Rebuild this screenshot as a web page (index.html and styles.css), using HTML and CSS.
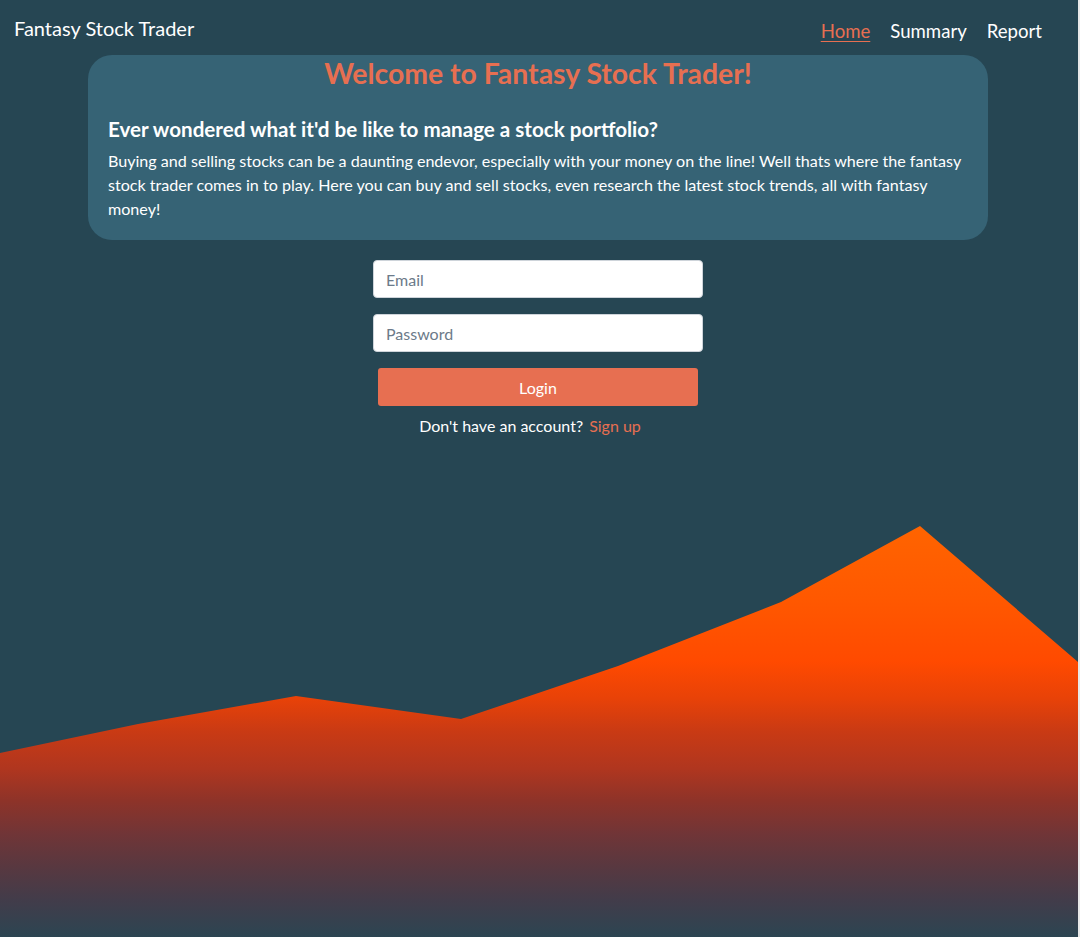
FILE: index.html
```html
<!DOCTYPE html>
<html lang="en">
<head>
<meta charset="utf-8">
<title>Fantasy Stock Trader</title>
<link rel="stylesheet" href="styles.css">
</head>
<body>
<div class="page">
  <header class="navbar">
    <a class="brand" href="#">Fantasy Stock Trader</a>
    <nav class="nav">
      <a class="nav-link active" href="#">Home</a>
      <a class="nav-link" href="#">Summary</a>
      <a class="nav-link" href="#">Report</a>
    </nav>
  </header>

  <section class="intro">
    <h1 class="intro-title">Welcome to Fantasy Stock Trader!</h1>
    <h2 class="intro-sub">Ever wondered what it'd be like to manage a stock portfolio?</h2>
    <p class="intro-text">Buying and selling stocks can be a daunting endevor, especially with your money on the line! Well thats where the fantasy stock trader comes in to play. Here you can buy and sell stocks, even research the latest stock trends, all with fantasy money!</p>
  </section>

  <form class="login">
    <input class="field" type="email" placeholder="Email">
    <input class="field" type="password" placeholder="Password">
    <button class="btn" type="button">Login</button>
    <p class="signup">Don't have an account? <a href="#" class="signup-link">Sign up</a></p>
  </form>

  <svg class="chart" viewBox="0 0 1078 411" preserveAspectRatio="none" aria-hidden="true">
    <defs>
      <linearGradient id="area" x1="0" y1="0" x2="0" y2="411" gradientUnits="userSpaceOnUse">
        <stop offset="0" stop-color="#ff6400"/>
        <stop offset="0.18" stop-color="#ff5800"/>
        <stop offset="0.33" stop-color="#ff4a00"/>
        <stop offset="0.42" stop-color="#e84208"/>
        <stop offset="0.50" stop-color="#c93a14"/>
        <stop offset="0.59" stop-color="#b0361f"/>
        <stop offset="0.67" stop-color="#8d3329"/>
        <stop offset="0.75" stop-color="#703537"/>
        <stop offset="0.83" stop-color="#583840"/>
        <stop offset="0.91" stop-color="#423c4a"/>
        <stop offset="1" stop-color="#2c4552"/>
      </linearGradient>
    </defs>
    <polygon fill="url(#area)" points="0,227 138,198 296,170 461,193 618,140 781,76 920,0 1078,136 1078,411 0,411"/>
  </svg>
</div>
</body>
</html>
```

FILE: styles.css
```css
html, body {
  margin: 0;
  padding: 0;
}

body {
  background: #e9e9e9;
  font-family: Lato, "Open Sans", "Noto Sans", sans-serif;
  color: #ffffff;
}

.page {
  margin-right: 2px;
  min-height: 937px;
  background: #264653;
  display: flex;
  flex-direction: column;
  overflow: hidden;
}

.navbar {
  display: flex;
  justify-content: space-between;
  align-items: flex-start;
  padding: 15px 36px 0 14px;
  height: 40px;
}

.brand {
  color: #ffffff;
  text-decoration: none;
  font-size: 20px;
  line-height: 26px;
}

.nav {
  display: flex;
  gap: 20px;
  padding-top: 3px;
}

.nav-link {
  color: #ffffff;
  text-decoration: none;
  font-size: 18.6px;
  line-height: 26px;
}

.nav-link.active {
  color: #e76f51;
  text-decoration: underline;
  text-underline-offset: 3px;
  text-decoration-thickness: 1px;
}

.intro {
  width: 900px;
  margin: 0 0 0 88px;
  box-sizing: border-box;
  background: #366375;
  border-radius: 24px;
  padding: 1px 20px 19px 20px;
}

.intro-title {
  margin: 0;
  text-align: center;
  color: #e76f51;
  font-size: 28.4px;
  line-height: 34px;
  font-weight: 700;
}

.intro-sub {
  margin: 26px 0 0 0;
  font-size: 20.6px;
  line-height: 26px;
  font-weight: 700;
}

.intro-text {
  margin: 7px 0 0 0;
  font-size: 16.1px;
  line-height: 24px;
}

.login {
  width: 330px;
  margin: 20px 0 0 373px;
  display: flex;
  flex-direction: column;
  align-items: center;
}

.field {
  width: 100%;
  height: 38px;
  box-sizing: border-box;
  border: 1px solid #ced4da;
  border-radius: 4px;
  background: #ffffff;
  padding: 0 12px;
  font-family: inherit;
  font-size: 16px;
  color: #333;
  margin-bottom: 16px;
}

.field::placeholder {
  color: #6c7a89;
}

.btn {
  width: 320px;
  height: 38px;
  border: none;
  border-radius: 3px;
  background: #e76f51;
  color: #ffffff;
  font-family: inherit;
  font-size: 16px;
}

.signup {
  margin: 9px 0 0 -16px;
  font-size: 16px;
  line-height: 22px;
}

.signup-link {
  color: #e76f51;
  text-decoration: none;
  margin-left: 2px;
}

.chart {
  display: block;
  width: 100%;
  height: 411px;
  margin-top: auto;
}
```
